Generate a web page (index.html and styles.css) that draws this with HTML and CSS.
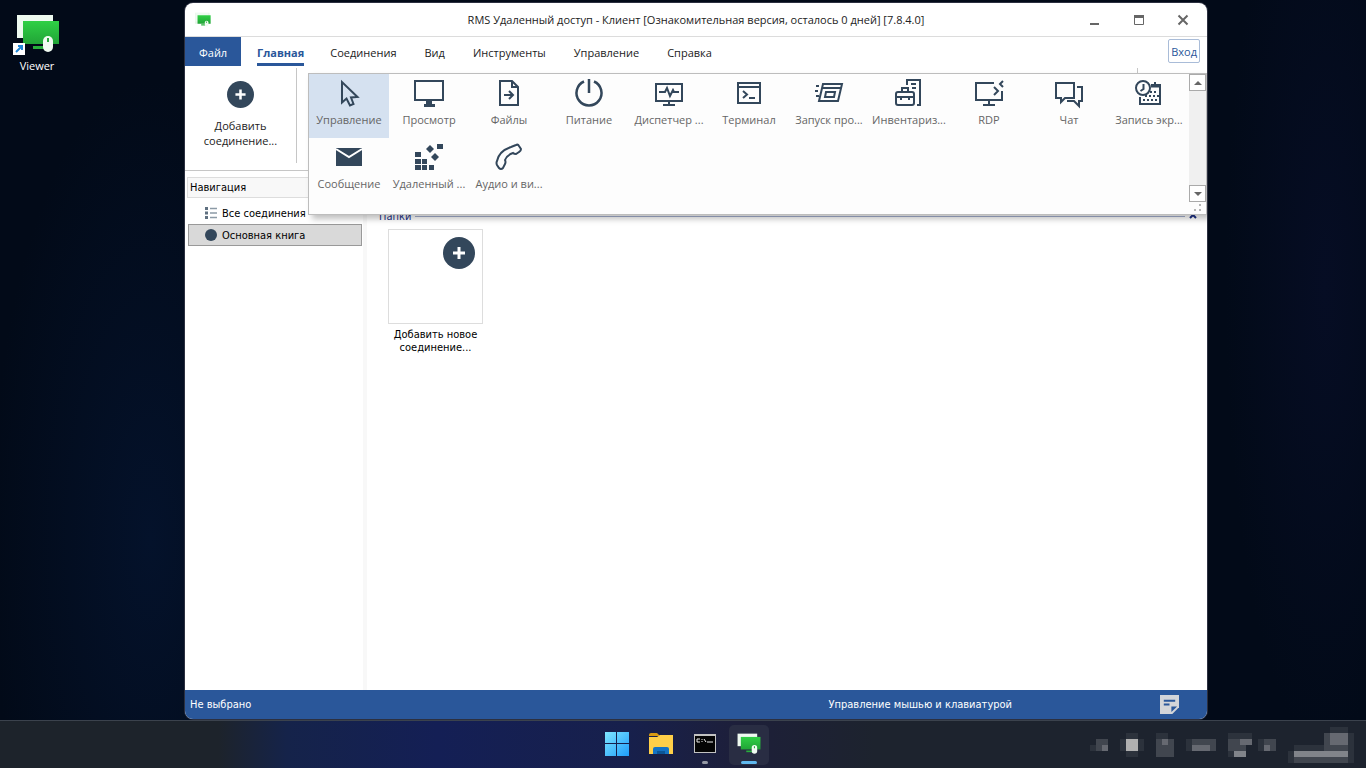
FILE: index.html
```html
<!DOCTYPE html>
<html lang="ru">
<head>
  <meta charset="UTF-8">
  <meta name="viewport" content="width=device-width, initial-scale=1.0">
  <title>RMS Удаленный доступ - Клиент</title>
  <link rel="stylesheet" href="styles.css">
</head>
<body>
  <svg class="defs" aria-hidden="true">
    <defs>
      <linearGradient id="green" x1="0" y1="0" x2="0" y2="1">
        <stop offset="0" stop-color="#2fd045"/>
        <stop offset="1" stop-color="#21a437"/>
      </linearGradient>
      <linearGradient id="win" x1="0" y1="0" x2="1" y2="1">
        <stop offset="0" stop-color="#7fe6ff"/>
        <stop offset="1" stop-color="#1e9dfa"/>
      </linearGradient>
      <symbol id="viewer" viewBox="0 0 44 40">
        <path d="M1 1h36v23H1z" fill="#eefaf0"/>
        <path d="M7 7h36v23H7z" fill="url(#green)"/>
        <path d="M17 32h14v3H17z" fill="#28b03c"/>
        <rect x="27" y="22" width="10" height="16" rx="5" fill="#f0fbf1"/>
        <path d="M31 24h2v4h-2z" fill="#28a83c"/>
      </symbol>
      <symbol id="plus" viewBox="0 0 32 32">
        <circle cx="16" cy="16" r="16" fill="#33475b"/>
        <path d="M16 10v12M10 16h12" stroke="#fff" stroke-width="3"/>
      </symbol>
    </defs>
  </svg>

  <main class="desktop">
    <a class="shortcut" href="#">
      <svg class="shortcut-icon" viewBox="0 0 48 44">
        <use href="#viewer" x="3" y="0" width="44" height="40"/>
        <rect x="0" y="29" width="12" height="12" fill="#fff"/>
        <path d="M3 38l6-6M5 32h4v4" fill="none" stroke="#1f86d6" stroke-width="2"/>
      </svg>
      Viewer
    </a>

    <section class="window">
      <header class="titlebar">
        <svg class="title-icon" viewBox="0 0 44 40">
          <path d="M0 0h40v30H0z" fill="#e6f3e8"/>
          <use href="#viewer"/>
        </svg>
        <h1>RMS Удаленный доступ - Клиент [Ознакомительная версия, осталось 0 дней] [7.8.4.0]</h1>
        <div class="window-btns">
          <button aria-label="Свернуть"><svg viewBox="0 0 12 12"><path d="M1 10h9" stroke-width="2"/></svg></button>
          <button aria-label="Развернуть"><svg viewBox="0 0 12 12"><path d="M1 2.500h10" stroke-width="3"/><path d="M1.500 2v8.500h9V2"/></svg></button>
          <button aria-label="Закрыть"><svg viewBox="0 0 12 12"><path d="M1.500 1.500l9 9M10.500 1.500l-9 9" stroke-width="2"/></svg></button>
        </div>
      </header>

      <nav class="tabs">
        <button class="tab file">Файл</button>
        <button class="tab active"><span>Главная</span></button>
        <button class="tab">Соединения</button>
        <button class="tab">Вид</button>
        <button class="tab">Инструменты</button>
        <button class="tab">Управление</button>
        <button class="tab">Справка</button>
        <button class="login">Вход</button>
      </nav>

      <div class="ribbon">
        <button class="add-btn">
          <svg viewBox="0 0 32 32"><use href="#plus"/></svg>
          Добавить соединение...
        </button>
        <div class="ribbon-end"></div>
      </div>

      <div class="gallery">
        <div class="gallery-items">
          <button class="item selected">
            <svg viewBox="0 0 32 32"><path d="M9 5v20.500l4.500-4 3.500 7 3.500-1.500-2.500-6.500 6.500-.5z"/></svg>
            Управление
          </button>
          <button class="item">
            <svg viewBox="0 0 32 32"><path d="M2 4h28v19H2z"/><path class="fill" d="M13 24h6v3h3v3H11v-3h2z"/></svg>
            Просмотр
          </button>
          <button class="item">
            <svg viewBox="0 0 32 32"><path d="M7 4h12l6 6v18H7zM19 4v6h6M11 18h9M16 14l4 4-4 4"/></svg>
            Файлы
          </button>
          <button class="item">
            <svg viewBox="0 0 32 32"><path d="M11 4.500a12.500 12.500 0 1 0 10 0M16 2v14" stroke-width="2.500"/></svg>
            Питание
          </button>
          <button class="item">
            <svg viewBox="0 0 32 32"><path d="M3 7h26v17H3zM16 24v3M10 28h12M6 15h6l2-4 3 8 3-6 1 2h5"/></svg>
            Диспетчер ...
          </button>
          <button class="item">
            <svg viewBox="0 0 32 32"><path d="M5 6h22v20H5zM5 10h22M10 14l4 3.500-4 3.500M16 21h6"/></svg>
            Терминал
          </button>
          <button class="item">
            <svg viewBox="0 0 32 32"><path d="M10 7h19l-4 17H6zM9 11h19M13 15h9l-1 5h-9zM3 9h3M2 14h3M3 19h3"/></svg>
            Запуск про...
          </button>
          <button class="item">
            <svg viewBox="0 0 32 32"><path d="M14 8V3h13v25h-3M18 7h5M19 11h4M5 15h14q2 0 2 2v9q0 2-2 2H5q-2 0-2-2v-9q0-2 2-2zM9 15v-4h6v4M3 20h18M8 20v3M16 20v3"/></svg>
            Инвентариз...
          </button>
          <button class="item">
            <svg viewBox="0 0 32 32"><path d="M21 6H3v17h26v-9M16 23v4M10 28h12M21 10l4 4-4 4M30 4l-3 3 3 3"/></svg>
            RDP
          </button>
          <button class="item">
            <svg viewBox="0 0 32 32"><path d="M3 6h18v15H12l-4 4v-4H3zM24 10h5v14h-3v5l-5-5h-7"/></svg>
            Чат
          </button>
          <button class="item">
            <svg viewBox="0 0 32 32"><circle cx="10" cy="11" r="7"/><path d="M10.500 7v5l-3 2M18 8h9v19H7v-7M22 5v4"/><path d="M18 9h9" stroke-width="3"/><path d="M17 15h8M12 19h14M10 23h14" stroke-dasharray="2 2"/></svg>
            Запись экр...
          </button>
          <button class="item">
            <svg viewBox="0 0 32 32"><path class="fill" d="M3 7h26v18H3z"/><path class="fold" d="M3 8l13 8 13-8"/></svg>
            Сообщение
          </button>
          <button class="item">
            <svg viewBox="0 0 32 32"><path class="fill" d="M2 11h6v5H2zM2 18h6v5H2zM9 18h5v5H9zM2 24h6v5H2zM9 24h5v5H9zM16 24h5v5h-5zM24 3h6v5h-6zM17 4l4 4-4 4-4-4zM22 12l4 4-4 4-4-4z"/></svg>
            Удаленный ...
          </button>
          <button class="item">
            <svg viewBox="0 0 32 32"><path d="M18 6l5-2q2-1 3 1l2 3q0 2-2 3l-3 2q-2 0-3-1-6 2-8 7 1 2 0 4l-2 4q-2 2-4 0l-2-3q-1-2 0-4Q6 10 18 6z"/></svg>
            Аудио и ви...
          </button>
        </div>
        <div class="scroll">
          <button aria-label="Вверх"><svg viewBox="0 0 8 4"><path d="M0 4l4-4 4 4z"/></svg></button>
          <span class="track"></span>
          <button aria-label="Вниз"><svg viewBox="0 0 8 4"><path d="M0 0l4 4 4-4z"/></svg></button>
          <svg class="grip" viewBox="0 0 8 8"><path d="M5 0h2v2H5zM0 5h2v2H0zM5 5h2v2H5z"/></svg>
        </div>
      </div>

      <div class="workspace">
        <aside class="sidebar">
          <h2>Навигация</h2>
          <ul>
            <li><a href="#">
              <svg viewBox="0 0 12 12"><path d="M0 0h3v3H0zM0 4.500h3v3H0zM0 9h3v3H0z" fill="#5f7080"/><path d="M5 1.500h7M5 6h7M5 10.500h7" stroke="#8c9aa6" stroke-width="1.500"/></svg>
              Все соединения
            </a></li>
            <li><a class="current" href="#">
              <svg viewBox="0 0 12 12"><circle cx="6" cy="6" r="6" fill="#33475b"/></svg>
              Основная книга
            </a></li>
          </ul>
        </aside>

        <div class="content">
          <div class="group-title">
            <h2>Папки</h2>
            <svg viewBox="0 0 8 8"><path d="M1 6l3-3 3 3"/></svg>
          </div>
          <button class="folder">
            <span class="thumb"><svg viewBox="0 0 32 32"><use href="#plus"/></svg></span>
            Добавить новое соединение...
          </button>
        </div>
      </div>

      <footer class="statusbar">
        <span>Не выбрано</span>
        <span class="mode">Управление мышью и клавиатурой</span>
        <svg viewBox="0 0 20 20"><path d="M0 0h20v13l-7 7H0z" fill="#d3d5d9"/><path d="M4 6h12M4 10h6" stroke="#2a579a" stroke-width="2"/><path d="M12 18v-6h6z" fill="#2a579a"/></svg>
      </footer>
    </section>
  </main>

  <footer class="taskbar">
    <div class="apps">
      <button class="app" aria-label="Пуск">
        <svg viewBox="0 0 24 24" fill="url(#win)"><path d="M0 0h11v11H0zM12 0h12v11H12zM0 12h11v12H0zM12 12h12v12H12z"/></svg>
      </button>
      <button class="app" aria-label="Проводник">
        <svg viewBox="0 0 24 24"><path d="M0 3q0-2 2-2h6l3 3H0z" fill="#d99a12"/><path d="M0 5h8l3-2h13v19H0z" fill="#ffcf48"/><path d="M4 22v-5q0-2 2-2h12q2 0 2 2v5z" fill="#1473c4"/><path d="M8 22v-3h8v3z" fill="#0b5596"/></svg>
      </button>
      <button class="app running" aria-label="Командная строка">
        <svg viewBox="0 0 24 24"><path d="M1 2h22v19H1z" fill="#c2c2c2"/><path d="M2 4h20v16H2z" fill="#050505"/><path d="M7 7H4v3h3M9 7v1M9 9v1M11 7l2 3M14 10h6" fill="none" stroke="#eee"/></svg>
      </button>
      <button class="app open" aria-label="Viewer">
        <svg viewBox="0 0 44 40"><use href="#viewer"/></svg>
      </button>
    </div>
    <!-- tray icons and clock, pixelated; 6px cells -->
    <svg class="tray" viewBox="0 0 45 6" shape-rendering="crispEdges" aria-hidden="true">
      <path fill="#2c323c" d="M0 3h1v1H0zM5 2h1v2H5zM6 1h2v1H6zM6 4h2v1H6zM8 2h1v2H8zM11 1h2v1H11zM16 2h1v2H16zM23 1h4v1H23zM28 2h1v2H28zM33 4h1v2H33zM34 3h5v1H34zM40 0h3v1H40zM43 1h1v5H43zM23 4h1v1H23z"/>
      <path fill="#41464f" d="M1 2h2v2H1zM11 2h3v3H11zM17 2h4v2H17zM23 2h3v2H23zM29 2h2v2H29zM39 1h1v2H39zM34 5h9v1H34zM39 3h4v1H39z"/>
      <path fill="#666971" d="M2 3h1v1H2zM12 2h1v1H12zM17 3h3v1H17zM25 2h2v1H25zM29 3h1v1H29zM40 1h3v2H40z"/>
      <path fill="#81848a" d="M24 4h2v1H24zM34 4h9v1H34z"/>
      <path fill="#b0b0b0" d="M6 2h2v2H6z"/>
    </svg>
  </footer>
</body>
</html>
```
FILE: styles.css
```css
:root {
  --blue: #2a579a;
  --ink: #33475b;
  --line: #c6c6c6;
  --ui-font: "Open Sans", "Noto Sans", sans-serif;
  --small-font: "DejaVu Sans Condensed", "Noto Sans", sans-serif;
}

* {
  margin: 0;
  padding: 0;
  box-sizing: border-box;
}

body {
  display: flex;
  flex-direction: column;
  height: 100vh;
  overflow: hidden;
  font-family: var(--ui-font);
  font-size: 11px;
  color: #222;
}

button {
  font: inherit;
  color: inherit;
  background: none;
  border: none;
}

a {
  color: inherit;
  text-decoration: none;
}

ul {
  list-style: none;
}

.defs {
  position: absolute;
  width: 0;
  height: 0;
}

/* Desktop */
.desktop {
  position: relative;
  flex: 1;
  background:
    radial-gradient(ellipse 160px 460px at 11% 75%, #04122b, transparent),
    radial-gradient(ellipse 100px 460px at 97% 40%, #060d24, transparent),
    #020a18;
}

.shortcut {
  position: absolute;
  top: 14px;
  left: 0;
  width: 74px;
  display: flex;
  flex-direction: column;
  align-items: center;
  color: #fff;
  line-height: 16px;
}

.shortcut-icon {
  width: 48px;
  height: 44px;
}

/* Window */
.window {
  position: absolute;
  top: 3px;
  right: 159px;
  bottom: 1px;
  left: 185px;
  display: flex;
  flex-direction: column;
  background: #fff;
  border-radius: 8px;
  overflow: hidden;
  box-shadow: 0 0 0 1px #2c3040;
}

.titlebar {
  display: grid;
  grid-template-columns: 134px 1fr 134px;
  align-items: center;
  height: 34px;
  border-bottom: 1px solid #dcdcdc;
}

.title-icon {
  width: 16px;
  height: 16px;
  margin-left: 10px;
}

.titlebar h1 {
  font-size: 11px;
  font-weight: 400;
  text-align: center;
  white-space: nowrap;
}

.window-btns {
  display: flex;
}

.window-btns button {
  display: flex;
  align-items: center;
  justify-content: center;
  width: 44px;
  height: 33px;
}

.window-btns svg {
  width: 12px;
  height: 12px;
  fill: none;
  stroke: #666;
}

.tabs {
  display: flex;
  height: 29px;
}

.tab {
  padding: 2px 14px 0;
}

.tab.file {
  width: 56px;
  margin-right: 4px;
  background: var(--blue);
  color: #fff;
}

.tab.active {
  padding: 0 12px;
  color: var(--blue);
  font-weight: 700;
}

.tab.active span {
  display: block;
  padding-top: 6px;
  border-bottom: 3px solid var(--blue);
  line-height: 20px;
}

.login {
  margin: 2px 7px 3px auto;
  padding: 0 2px;
  border: 1px solid #a9bcd8;
  border-radius: 2px;
  color: var(--blue);
}

.ribbon {
  display: flex;
  justify-content: space-between;
  height: 105px;
  padding: 2px 0 7px;
  border-bottom: 1px solid var(--line);
}

.add-btn {
  display: flex;
  flex-direction: column;
  align-items: center;
  gap: 10px;
  width: 112px;
  padding: 13px 16px 0;
  border-right: 1px solid var(--line);
  line-height: 15px;
}

.add-btn svg {
  flex: none;
  width: 27px;
  height: 27px;
}

.ribbon-end {
  width: 70px;
  border-left: 1px solid var(--line);
}

/* Dropped down gallery, lies over the ribbon and workspace */
.gallery {
  position: absolute;
  top: 70px;
  right: 0;
  left: 123px;
  z-index: 1;
  display: flex;
  background: #fdfdfd;
  border: 1px solid #bdbdbd;
  box-shadow: 4px 4px 6px rgba(0, 0, 0, 0.25);
}

.gallery-items {
  flex: 1;
  display: grid;
  grid-template-columns: repeat(auto-fill, 80px);
  grid-auto-rows: 64px;
  padding-bottom: 12px;
}

.item {
  display: flex;
  flex-direction: column;
  align-items: center;
  padding-top: 3px;
  color: #666;
  line-height: 22px;
  white-space: nowrap;
}

.item.selected {
  background: #d5e1f0;
}

.item svg {
  width: 32px;
  height: 32px;
  fill: none;
  stroke: var(--ink);
  stroke-width: 2;
}

.item .fill {
  fill: var(--ink);
  stroke: none;
}

.item .fold {
  stroke: #fff;
}

.scroll {
  display: flex;
  flex-direction: column;
  width: 17px;
}

.scroll button {
  display: flex;
  align-items: center;
  justify-content: center;
  height: 17px;
  background: #fff;
  border: 1px solid #aaa;
}

.scroll button svg {
  width: 8px;
  height: 4px;
  fill: #666;
}

.track {
  flex: 1;
  background: #f0f0f0;
}

.grip {
  align-self: flex-end;
  width: 8px;
  height: 8px;
  margin: 2px 4px 2px 0;
  fill: #b5b5b5;
}

/* Workspace */
.workspace {
  flex: 1;
  display: flex;
  font-family: var(--small-font);
  color: #000;
}

.sidebar {
  width: 182px;
  padding: 6px 1px 0 2px;
  border-right: 4px solid #f8f8f8;
}

.sidebar h2 {
  height: 21px;
  padding-left: 2px;
  background: #f8f8f8;
  border: 1px solid #ddd;
  font-size: 11px;
  font-weight: 400;
  line-height: 19px;
}

.sidebar ul {
  padding: 4px 0 0 1px;
}

.sidebar a {
  display: flex;
  align-items: center;
  gap: 5px;
  height: 22px;
  padding-left: 16px;
  border: 1px solid transparent;
}

.sidebar a.current {
  background: #d9d9d9;
  border-color: #999;
}

.sidebar a svg {
  width: 12px;
  height: 12px;
}

.content {
  flex: 1;
  padding: 36px 10px 0 12px;
}

.group-title {
  display: flex;
  align-items: center;
  gap: 4px;
  height: 18px;
  color: #1e3287;
}

.group-title h2 {
  font-size: 11px;
  font-weight: 400;
}

.group-title::after {
  content: "";
  order: 1;
  flex: 1;
  height: 1px;
  background: #a5b0d0;
}

.group-title svg {
  order: 2;
  width: 8px;
  height: 8px;
  fill: none;
  stroke: #1e3287;
  stroke-width: 2;
}

.folder {
  display: flex;
  flex-direction: column;
  gap: 4px;
  width: 95px;
  margin: 4px 0 0 9px;
  line-height: 13px;
}

.thumb {
  display: flex;
  justify-content: flex-end;
  height: 95px;
  padding: 7px;
  border: 1px solid #ddd;
}

.thumb svg {
  width: 32px;
  height: 32px;
}

.statusbar {
  display: flex;
  align-items: center;
  height: 29px;
  padding: 0 28px 0 5px;
  background: var(--blue);
  color: #fff;
  font-family: var(--small-font);
}

.statusbar .mode {
  margin-left: auto;
}

.statusbar svg {
  width: 19px;
  height: 19px;
  margin-left: 148px;
}

/* Taskbar */
.taskbar {
  display: grid;
  grid-template-columns: 1fr auto 1fr;
  align-items: center;
  height: 48px;
  border-top: 1px solid #3b424d;
  background: linear-gradient(90deg, #1d232b 16%, #15234a 21%, #141f55 32%, #17204c 46%, #1d1f3a 54%, #1d232e 64%);
}

.apps {
  grid-column: 2;
  display: flex;
  gap: 4px;
}

.app {
  position: relative;
  width: 40px;
  height: 40px;
  padding-top: 2px;
  border-radius: 5px;
}

.app svg {
  width: 24px;
  height: 24px;
}

.app.open {
  background: #292d43;
}

.app.running::after,
.app.open::after {
  content: "";
  position: absolute;
  bottom: 1px;
  left: 17px;
  width: 6px;
  height: 3px;
  border-radius: 2px;
  background: #9599a5;
}

.app.open::after {
  left: 12px;
  width: 16px;
  background: #60b8ee;
}

.tray {
  justify-self: end;
  width: 270px;
  height: 36px;
  margin-right: 6px;
}
```
